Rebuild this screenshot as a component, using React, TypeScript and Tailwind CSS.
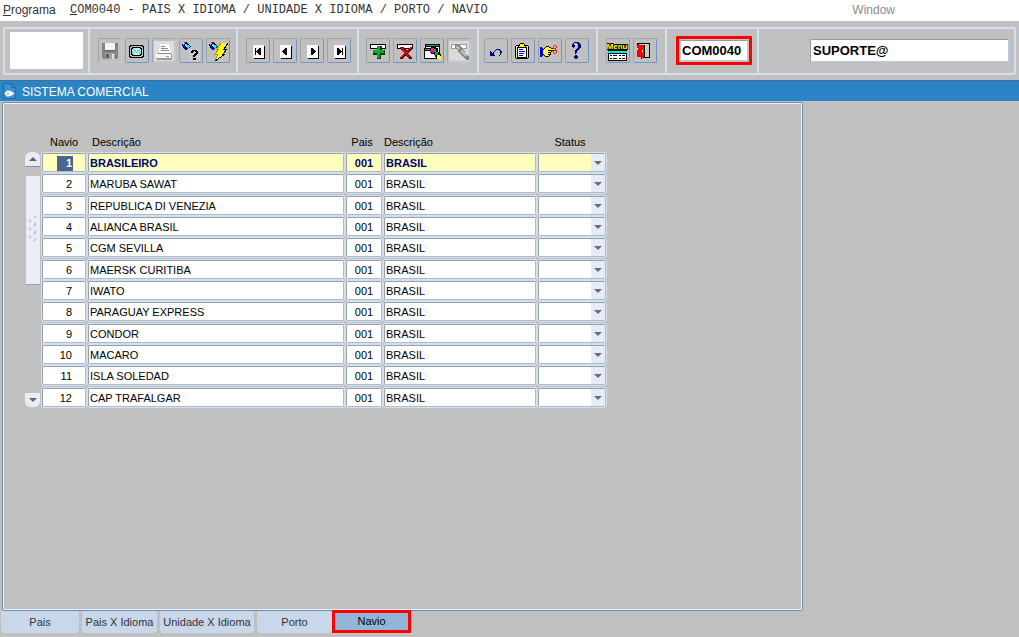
import React, { useState } from 'react';
import clsx from 'clsx';

interface Ship {
  id: number;
  name: string;
  countryCode: string;
  country: string;
}

const ships: Ship[] = [
  'BRASILEIRO',
  'MARUBA SAWAT',
  'REPUBLICA DI VENEZIA',
  'ALIANCA BRASIL',
  'CGM SEVILLA',
  'MAERSK CURITIBA',
  'IWATO',
  'PARAGUAY EXPRESS',
  'CONDOR',
  'MACARO',
  'ISLA SOLEDAD',
  'CAP TRAFALGAR'
].map((name, i) => ({ id: i + 1, name, countryCode: '001', country: 'BRASIL' }));

const tabs = [
  { label: 'Pais', width: 'w-[78px]' },
  { label: 'Pais X Idioma', width: 'w-[75px]' },
  { label: 'Unidade X Idioma', width: 'w-[94px]' },
  { label: 'Porto', width: 'w-[75px]' },
  { label: 'Navio', width: 'w-[79px]' }
];

const palette: { [key: string]: string } = {
  k: '#000000',
  w: '#ffffff',
  g: '#808080',
  r: '#c00000',
  n: '#000080',
  b: '#0000e0',
  y: '#ffff00',
  o: '#f4e890',
  c: '#00f0f0',
  q: '#90e8e8',
  p: '#ff2020',
  v: '#40d8d8'
};

// Draws one square per character, '.' is transparent
const Bitmap: React.FC<{ x: number; y: number; rows: string[] }> = ({ x, y, rows }) => (
  <>
    {rows.map((row, j) =>
      row.split('').map((c, i) =>
        palette[c] ? <rect key={`${i}-${j}`} x={x + i} y={y + j} width="1" height="1" fill={palette[c]} /> : null
      )
    )}
  </>
);

const Icon: React.FC<{ children: React.ReactNode }> = ({ children }) => (
  <svg width="24" height="24" viewBox="0 0 24 24" shapeRendering="crispEdges" className="block" aria-hidden="true">
    {children}
  </svg>
);

const POINTER = [
  '..rrk....',
  '...kkk...',
  'n.kcckk..',
  'nnbwccck.',
  '.nbbwccck',
  '.nbbbcck.',
  '..nbbk...',
  '...nn....'
];

const QUESTION = [
  '.kkkkk.',
  'kkk.kkk',
  'kk...kk',
  '....kkk',
  '...kkk.',
  '..kkk..',
  '..kk...',
  '.......',
  '..kkk..',
  '..kkk..'
];

const SCREEN = [
  '.kkkkkkkkkkkkk.',
  'kk...........kk',
  'k..kkkkkkkkk..k',
  'k.kkqwqwqwqkk.k',
  'k.kqvqwqwqvqk.k',
  'k.kwqvqwqvqwk.k',
  'k.kqwqvqvqwqk.k',
  'k.kvqwqvqwqvk.k',
  'k.kqvqwqwqvqk.k',
  'k.kkqwqwqwqkk.k',
  'k..kkkkkkkkk..k',
  'kk...........kk',
  '.kkkkkkkkkkkkk.'
];

const DOTS = Array.from({ length: 6 }, () => ['y.y.y.y.y.y', '...........']).flat();

const UNDO = [
  '......nnnn..',
  '.....n...nn.',
  'n...n.....nn',
  'nn.n......nn',
  'nnnn......n.',
  'nnnn......n.',
  'nnnnn....n..'
];

const BIG_QUESTION = [
  '...nnnnn...',
  '..n...nnn..',
  '.nn....nnn.',
  '.nnn...nnn.',
  '.nnn...nnn.',
  '..n....nnn.',
  '......nnn..',
  '.....nnn...',
  '....nnn....',
  '....nn.....',
  '....nn.....',
  '....n......',
  '...........',
  '....nn.....',
  '...nnnn....',
  '...nnnn....',
  '....nn.....'
];

const HAND = [
  '..............pp..',
  '......kkk....p..p.',
  'bb...kyoykk..p..p.',
  'bbb.kyoyoyykkppp..',
  'bbbkyoyoyoyoyoyk..',
  'bbbyoyoykkkkkkppp.',
  'bbboyoyoyoyk.p..p.',
  'bbbyoyoykkk..p..p.',
  'bbboyoyoyyk...pp..',
  'bbbkyoyokkk.......',
  'bbb.kyoyyk........',
  'bb...kkkk.........'
];

const CLIPBOARD = [
  '.....kkkk.....',
  '....kyyyyk....',
  '.kkkkyyyykkkk.',
  'kookyyyyyykook',
  'kokkkkkkkkkkok',
  'kokwwwwwwwwkok',
  'kokwbbbbwwwkok',
  'kokwwwwwwwwkok',
  'kokwbbbbbbwkok',
  'kokwwwwwwwwkok',
  'kokwbbbbbwwkok',
  'kokwwwwwwwwkok',
  'kokwbbbbwwwkok',
  'kokwwwwwwwwkok',
  'kokkkkkkkkkkok',
  '.kkkkkkkkkkkk.'
];

const SaveIcon = () => (
  <Icon>
    <path d="M4 4h16v15h-1v1H5v-1H4z" fill="#838383" />
    <path d="M7 4h10v7H7z" fill="#f4f4f4" />
    <path d="M18 5h1v1h-1zM7 11h10v1H7z" fill="#5e5e5e" />
    <path d="M7 14h10v6H7z" fill="#a2a2a2" />
    <path d="M8 15h3v4H8z" fill="#5e5e5e" />
    <path d="M14 15h2v5h-2z" fill="#e0e0e0" />
  </Icon>
);

const PrintIcon = () => (
  <Icon>
    <path d="M2 2h20v20H2z" fill="#dedede" />
    <path d="M8 5h9l2 9H7z" fill="#ffffff" />
    <path d="M9 7h4v1H9zM9 9h7v1H9zM9 11h8v1H9zM6 14h13v1H6z" fill="#888888" />
    <path d="M4 15h15l1 1v4H4z" fill="#f6f6f6" />
    <path d="M5 20h15v1H5zM19 15h1v5h-1zM14 17h3v1h-3zM4 19h15v1H4z" fill="#999999" />
  </Icon>
);

const BoltIcon = () => (
  <Icon>
    <path d="M15 4h7l-4 6h3l-4 5h2l-10 7 3-7H9l4-5h-2z" fill="#ffff00" />
    <path d="M22 4l-4 6h3l-4 5h2l-10 7" fill="none" stroke="#000000" />
    <path d="M15 4l-4 6h2l-4 5h3l-3 6" fill="none" stroke="#a0a020" />
    <Bitmap x={3} y={3} rows={POINTER} />
  </Icon>
);

const NavIcon: React.FC<{ d: string }> = ({ d }) => (
  <Icon>
    <path d="M8 7h11v13H8z" fill="#000000" />
    <path d="M7 6h11v13H7z" fill="#f8f8f8" />
    <path d={d} fill="#000000" />
  </Icon>
);

const RecordBar = () => (
  <>
    <path d="M4 5h16v5H4z" fill="#000000" />
    <path d="M5 6h14v3H5z" fill="#ffffff" />
  </>
);

const InsertIcon = () => (
  <Icon>
    <RecordBar />
    <path d="M11 7h5v4h3v5h-4v4h-4v-4H7v-4h4z" fill="#003800" />
    <path d="M11 7h3v4h4v3h-4v5h-3v-5H7v-3h4z" fill="#00b020" />
  </Icon>
);

const DeleteIcon = () => (
  <Icon>
    <RecordBar />
    <path d="M7 8h3l4 4 3-4h2v2l-4 4 4 5v1h-3l-3-4-4 4H7v-2l4-4-4-4z" fill="#500000" />
    <path d="M7 8h2l4 5 4-5h2l-5 6 4 5h-2l-4-4-4 4H7l4-5z" fill="#d80010" />
  </Icon>
);

const QueryIcon = () => (
  <Icon>
    <path d="M5 5h15v12H5z" fill="#000000" />
    <path d="M6 6h13v1H6z" fill="#00a0a0" />
    <path d="M6 8h13v8H6z" fill="#ffffff" />
    <path d="M4 9h14v11H4z" fill="#000000" />
    <path d="M5 10h9v1H5z" fill="#00a0a0" />
    <path d="M5 12h12v7H5z" fill="#ffffff" />
    <path d="M11 8h4l2 2v3h2l2 3v4h-4l-3-5h-3l-1-3z" fill="#000000" />
    <path d="M11 9h3v2h-3z" fill="#ff3030" />
    <path d="M10 11h4v3h-4z" fill="#e000c0" />
    <path d="M14 10h2v3h-2zM15 13h3v3h-3z" fill="#00c020" />
    <path d="M17 16h3v1h1v4h-2v-1h-2z" fill="#ffff40" />
  </Icon>
);

const CancelQueryIcon = () => (
  <Icon>
    <path d="M2 2h20v20H2z" fill="#dadada" />
    <path d="M4 5h16v5H4z" fill="#999999" />
    <path d="M5 6h14v3H5z" fill="#ffffff" />
    <path d="M8 6h4l3 3 7 9v3h-3l-8-9-3-3z" fill="#808080" />
    <path d="M9 7h2l2 2-2 2-2-2zM13 12l2-2 5 6-2 2z" fill="#b8b8b8" />
  </Icon>
);

const MenuIcon = () => (
  <Icon>
    <text
      x="11"
      y="10"
      textAnchor="middle"
      className="font-['Liberation_Sans'] text-[8px] font-bold"
      fill="#ffff00"
      stroke="#000000"
      strokeWidth="2"
      paintOrder="stroke"
    >
      Menu
    </text>
    <path d="M2 11h19v11H2z" fill="#000000" />
    <path d="M2 12h19v2H2z" fill="#00e8e8" />
    <path d="M3 15h17v6H3z" fill="#ffffff" />
    <path
      d="M4 16h2v1H4zM7 16h4v1H7zM13 16h2v1h-2zM16 16h3v1h-3zM4 19h2v1H4zM7 19h4v1H7zM13 19h2v1h-2zM16 19h3v1h-3z"
      fill="#000000"
    />
  </Icon>
);

const ExitIcon = () => (
  <Icon>
    <path d="M4 4h13v15H9v1H8v-2H4z" fill="#000000" />
    <path d="M6 5h10v13H6z" fill="#cccccc" />
    <path d="M4 6h7v12l-2 1v-1H4z" fill="#ff0000" />
    <path d="M11 6h1v12h-1z" fill="#000000" />
    <path d="M4 9h1v2H4zM9 11h1v2H9z" fill="#ffff00" />
  </Icon>
);

interface ToolButtonProps {
  label: string;
  disabled?: boolean;
  children: React.ReactNode;
}

const ToolButton: React.FC<ToolButtonProps> = ({ label, disabled, children }) => (
  <button
    type="button"
    aria-label={label}
    disabled={disabled}
    className={clsx(
      'h-[25px] w-6 shrink-0 overflow-hidden rounded-[2px] border border-t-[#a2a2a2] border-l-[#a2a2a2]',
      disabled ? 'border-r-[#bccde2] border-b-[#bccde2]' : 'border-r-[#6f97c1] border-b-[#6f97c1]'
    )}
  >
    <span className="-m-px block">{children}</span>
  </button>
);

const section = 'flex shrink-0 items-center gap-[3px] border-r-2 border-[#d3dfee] pb-px';

const Toolbar = () => (
  <div className="bg-[#c0c0c0] px-[3px] pt-[6px] pb-[5px]">
    <div className="flex h-12 rounded-[2px] border-2 border-[#d3dfee]">
      <div className={`${section} w-[85px] pl-[5px]`}>
        <div className="h-[37px] w-[73px] bg-white" />
      </div>
      <div className={`${section} w-[148px] pl-2`}>
        <ToolButton label="Salvar" disabled>
          <SaveIcon />
        </ToolButton>
        <ToolButton label="Tela">
          <Icon>
            <Bitmap x={4} y={6} rows={SCREEN} />
          </Icon>
        </ToolButton>
        <ToolButton label="Imprimir" disabled>
          <PrintIcon />
        </ToolButton>
        <ToolButton label="Entrar consulta">
          <Icon>
            <Bitmap x={10} y={11} rows={DOTS} />
            <Bitmap x={3} y={3} rows={POINTER} />
            <Bitmap x={12} y={11} rows={QUESTION} />
          </Icon>
        </ToolButton>
        <ToolButton label="Executar consulta">
          <BoltIcon />
        </ToolButton>
      </div>
      <div className={`${section} w-[121px] pl-2`}>
        <ToolButton label="Primeiro">
          <NavIcon d="M9 9h1v7H9zM15 9v7h-2v-1h-1v-1h-1v-1h-1v-1h1v-1h1v-1h1V9z" />
        </ToolButton>
        <ToolButton label="Anterior">
          <NavIcon d="M14 9v7h-2v-1h-1v-1h-1v-1H9v-1h1v-1h1v-1h1V9z" />
        </ToolButton>
        <ToolButton label="Próximo">
          <NavIcon d="M11 9v7h2v-1h1v-1h1v-1h1v-1h-1v-1h-1v-1h-1V9z" />
        </ToolButton>
        <ToolButton label="Último">
          <NavIcon d="M15 9h1v7h-1zM10 9v7h2v-1h1v-1h1v-1h1v-1h-1v-1h-1v-1h-1V9z" />
        </ToolButton>
      </div>
      <div className={`${section} w-[120px] pl-[7px]`}>
        <ToolButton label="Inserir registro">
          <InsertIcon />
        </ToolButton>
        <ToolButton label="Remover registro">
          <DeleteIcon />
        </ToolButton>
        <ToolButton label="Consultar">
          <QueryIcon />
        </ToolButton>
        <ToolButton label="Cancelar consulta" disabled>
          <CancelQueryIcon />
        </ToolButton>
      </div>
      <div className={`${section} w-[119px] pl-[5px]`}>
        <ToolButton label="Desfazer">
          <Icon>
            <Bitmap x={6} y={10} rows={UNDO} />
          </Icon>
        </ToolButton>
        <ToolButton label="Lista de valores">
          <Icon>
            <Bitmap x={4} y={4} rows={CLIPBOARD} />
          </Icon>
        </ToolButton>
        <ToolButton label="Recortar">
          <Icon>
            <Bitmap x={2} y={6} rows={HAND} />
          </Icon>
        </ToolButton>
        <ToolButton label="Ajuda">
          <Icon>
            <Bitmap x={6} y={3} rows={BIG_QUESTION} />
          </Icon>
        </ToolButton>
      </div>
      <div className={`${section} w-[69px] pl-2`}>
        <ToolButton label="Menu principal">
          <MenuIcon />
        </ToolButton>
        <ToolButton label="Sair">
          <ExitIcon />
        </ToolButton>
      </div>
      <div className={`${section} w-[92px] pl-[9px]`}>
        <div className="h-[29px] w-[76px] rounded-[1px] border-3 border-[#ff0000] p-px">
          <input
            aria-label="Código do programa"
            defaultValue="COM0040"
            className="block h-[21px] w-full border border-[#b7cbe3] border-t-[#8d9cb0] bg-white pl-px text-[13px] font-bold outline-none"
          />
        </div>
      </div>
      <div className="flex min-w-0 flex-1 items-center pr-[5px] pb-px pl-[51px]">
        <input
          aria-label="Usuário"
          defaultValue="SUPORTE@"
          className="h-[23px] w-full min-w-0 rounded-[2px] border border-[#b7cbe3] border-t-[#8d9cb0] border-l-[#8d9cb0] bg-white pl-0.5 text-[13px] font-bold outline-none"
        />
      </div>
    </div>
  </div>
);

const field =
  'block h-[19px] w-full rounded-[2px] border border-t-[#96a0ae] border-l-[#96a0ae] border-r-[#a9bbd2] border-b-[#a9bbd2] ring-1 ring-[#d5e0ee] outline-none';

interface ShipRowProps {
  ship: Ship;
  active: boolean;
  onSelect: () => void;
}

const ShipRow: React.FC<ShipRowProps> = ({ ship, active, onSelect }) => {
  const tone = active ? 'bg-[#ffffbd] font-bold text-[#00007b]' : 'bg-white text-black';

  return (
    <tr className="h-[21px] align-top nth-[3n+2]:h-[22px]" onFocus={onSelect}>
      <td className="p-px">
        <div className={clsx(field, tone, 'flex items-end justify-end pr-3')}>
          <input
            aria-label="Navio"
            defaultValue={ship.id}
            className={clsx(
              'h-[15px] w-4 pr-px text-right outline-none',
              active && 'bg-[#4a6491] text-white'
            )}
          />
        </div>
      </td>
      <td className="p-px">
        <input aria-label="Descrição do navio" defaultValue={ship.name} className={clsx(field, tone, 'pl-px')} />
      </td>
      <td className="p-px">
        <input aria-label="Pais" defaultValue={ship.countryCode} className={clsx(field, tone, 'text-center')} />
      </td>
      <td className="p-px">
        <input aria-label="Descrição do pais" defaultValue={ship.country} className={clsx(field, tone, 'pl-px')} />
      </td>
      <td className="p-px">
        <div className="relative">
          <select aria-label="Status" className={clsx(field, tone, 'appearance-none')} defaultValue="">
            <option value=""></option>
            <option value="A">Ativo</option>
            <option value="I">Inativo</option>
          </select>
          <span className="pointer-events-none absolute inset-y-px right-px flex w-[14px] items-center justify-center bg-[#e6ecf4]">
            <svg width="8" height="4" viewBox="0 0 8 4" aria-hidden="true">
              <path d="M0 0h8L4 4z" fill="#666c80" />
            </svg>
          </span>
        </div>
      </td>
    </tr>
  );
};

const ScrollBar = () => (
  <div className="flex w-[15px] shrink-0 flex-col pt-[17px]">
    <button
      type="button"
      aria-label="Rolar para cima"
      className="flex h-[15px] items-center justify-center rounded-t-[6px] border-b border-[#8194ae] bg-[#e9eef6]"
    >
      <svg width="8" height="4" viewBox="0 0 8 4" aria-hidden="true">
        <path d="M0 4h8L4 0z" fill="#5f667c" />
      </svg>
    </button>
    <div className="flex-1 pt-[9px]">
      <div className="ml-px flex h-[109px] items-center justify-center border-b border-[#86a6c8] bg-[#e9eef6]">
        <svg width="10" height="28" viewBox="0 0 10 28" aria-hidden="true">
          {[0, 8, 16].map(y => (
            <path
              key={y}
              d={`M6 ${y + 2}l2-2M1 ${y + 6}l2-2M6 ${y + 9}l2-2`}
              stroke="#a9bdd8"
              strokeWidth="1.2"
            />
          ))}
        </svg>
      </div>
    </div>
    <button
      type="button"
      aria-label="Rolar para baixo"
      className="flex h-[15px] items-center justify-center rounded-b-[6px] border-b border-[#b4c8e0] bg-[#e9eef6]"
    >
      <svg width="8" height="4" viewBox="0 0 8 4" aria-hidden="true">
        <path d="M0 0h8L4 4z" fill="#5f667c" />
      </svg>
    </button>
  </div>
);

export default function App() {
  const [activeTab, setActiveTab] = useState('Navio');
  const [activeRow, setActiveRow] = useState(1);

  return (
    <div className="flex min-h-screen flex-col bg-[#c0c0c0] font-['Liberation_Sans',Arial,sans-serif] text-[11px] text-black">
      {/* Menu bar */}
      <nav className="flex h-[21px] items-start bg-white text-[12px] leading-[20px] text-[#333333]">
        <button type="button" className="w-[70px] shrink-0 pl-[3px] text-left">
          <span className="underline">P</span>rograma
        </button>
        <button
          type="button"
          className="shrink-0 text-left font-['Liberation_Mono',monospace] text-[12px] leading-[20px] whitespace-nowrap"
        >
          <span className="underline">C</span>OM0040 - PAIS X IDIOMA / UNIDADE X IDIOMA / PORTO / NAVIO
        </button>
        <button type="button" className="mr-[124px] ml-auto text-[#8c8c8c]">
          Window
        </button>
      </nav>

      <Toolbar />

      {/* Title bar */}
      <header className="flex h-[21px] items-center border-t border-[#3d6da3] bg-[#2b84c6] text-white">
        <svg width="13" height="16" viewBox="0 0 13 16" className="ml-[3px]" aria-hidden="true">
          <path d="M.5.5h8l4 4v11H.5z" fill="#3a8fd0" stroke="#1f6ca8" />
          <path d="M8.5 .5v4h4" fill="none" stroke="#1f6ca8" />
          <path d="M7 7.5l4.5 3L7 13.5z" fill="#ffffff" />
          <circle cx="5" cy="10.5" r="2" fill="none" stroke="#ffffff" strokeWidth="1.5" />
          <path d="M1.5 10.5h2M5 7v7" stroke="#ffffff" />
        </svg>
        <h1 className="ml-[6px] pt-px text-[12px]">SISTEMA COMERCIAL</h1>
      </header>

      {/* Ships block */}
      <main className="mt-px mr-[216px] ml-[2px] flex-1 rounded-[2px] border border-[#6e8fb4] pb-4 shadow-[inset_1px_1px_0_#eef3f9,inset_-1px_-1px_0_#eef3f9]">
        <div className="mt-[32px] ml-[22px] flex gap-px">
          <ScrollBar />
          <table className="w-[566px] table-fixed border-collapse">
            <colgroup>
              <col className="w-[46px]" />
              <col className="w-[258px]" />
              <col className="w-[38px]" />
              <col className="w-[154px]" />
              <col className="w-[70px]" />
            </colgroup>
            <thead>
              <tr className="h-[17px] align-top leading-[14px]">
                <th className="p-0 text-center font-normal">Navio</th>
                <th className="p-0 pl-[5px] text-left font-normal">Descrição</th>
                <th className="p-0 pr-1 text-center font-normal">Pais</th>
                <th className="p-0 pl-px text-left font-normal">Descrição</th>
                <th className="p-0 pr-1 text-center font-normal">Status</th>
              </tr>
            </thead>
            <tbody>
              {ships.map(ship => (
                <ShipRow
                  key={ship.id}
                  ship={ship}
                  active={ship.id === activeRow}
                  onSelect={() => setActiveRow(ship.id)}
                />
              ))}
            </tbody>
          </table>
        </div>
      </main>

      {/* Tabs */}
      <div role="tablist" className="mb-1 flex h-[22px] items-end gap-[3px] pl-px">
        {tabs.map(tab => (
          <button
            key={tab.label}
            type="button"
            role="tab"
            aria-selected={tab.label === activeTab}
            onClick={() => setActiveTab(tab.label)}
            className={clsx(
              'shrink-0 whitespace-nowrap',
              tab.width,
              tab.label === activeTab
                ? '-ml-[3px] h-[23px] border-3 border-[#ff0000] bg-[#92b6d8] text-black'
                : 'h-[22px] rounded-b-[4px] bg-[#c9d7ea] text-[#333333]'
            )}
          >
            {tab.label}
          </button>
        ))}
      </div>
    </div>
  );
}
